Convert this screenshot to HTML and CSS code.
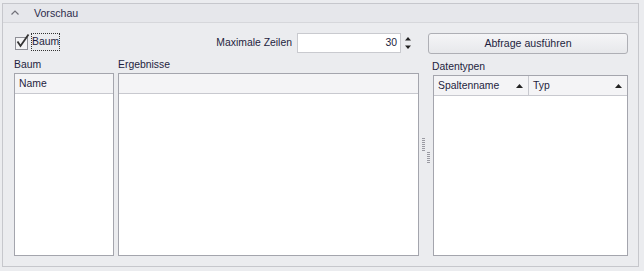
FILE: index.html
```html
<!DOCTYPE html>
<html>
<head>
<meta charset="utf-8">
<link rel="stylesheet" href="styles.css">
</head>
<body>
<div class="panel">
  <div class="ph">
    <svg class="chev" width="8" height="5" viewBox="0 0 8 5"><path d="M0.5 4.5 L4 1 L7.5 4.5" fill="none" stroke="#707078" stroke-width="1.2"/></svg>
    <span class="ptitle">Vorschau</span>
  </div>
  <div class="pb">
    <div class="toprow">
      <div class="cb">
        <span class="box"><svg width="16" height="16" viewBox="0 0 16 16"><path d="M2.5 8.5 L5.5 13 L13.5 1.5" fill="none" stroke="#333" stroke-width="1.8"/></svg></span>
        <span class="cbl">Baum</span>
      </div>
      <div class="maxz">
        <span class="mzl">Maximale Zeilen</span>
        <div class="inp">30</div>
        <div class="spin">
          <svg width="8" height="14" viewBox="0 0 8 14"><path d="M4 1 L7 4.5 L1 4.5 Z" fill="#222"/><path d="M1 9.5 L7 9.5 L4 13 Z" fill="#222"/></svg>
        </div>
      </div>
      <div class="btn">Abfrage ausführen</div>
    </div>
    <div class="main">
      <div class="col baum">
        <div class="lbl">Baum</div>
        <div class="list"><div class="lh"><span class="hc">Name</span></div></div>
      </div>
      <div class="col erg">
        <div class="lbl">Ergebnisse</div>
        <div class="list"><div class="lh"></div></div>
      </div>
      <div class="split">
        <div class="grip g1"></div>
        <div class="grip g2"></div>
      </div>
      <div class="col dt">
        <div class="lbl">Datentypen</div>
        <div class="list">
          <div class="lh cols">
            <div class="hcol c1"><span>Spaltenname</span><svg width="7" height="4" viewBox="0 0 7 4"><path d="M3.5 0 L7 4 L0 4 Z" fill="#222"/></svg></div>
            <div class="hcol c2"><span>Typ</span><svg width="7" height="4" viewBox="0 0 7 4"><path d="M3.5 0 L7 4 L0 4 Z" fill="#222"/></svg></div>
          </div>
        </div>
      </div>
    </div>
  </div>
</div>
</body>
</html>
```
FILE: styles.css
```css
html, body {
  margin: 0;
  padding: 0;
  background: #ebecef;
}
body {
  font-family: "Liberation Sans", Arial, sans-serif;
  font-size: 10.4px;
  color: #1e1e3e;
  width: 644px;
  height: 271px;
  overflow: hidden;
}
.panel {
  margin: 3px 0 0 2px;
  width: 635px;
  height: 262px;
  border: 1px solid #c6c7cc;
  background: #ebecef;
  display: flex;
  flex-direction: column;
}
.ph {
  height: 18px;
  border-bottom: 1px solid #d6d7db;
  background: #e6e7eb;
  display: flex;
  align-items: center;
}
.chev {
  margin-left: 8px;
  margin-top: -1px;
}
.ptitle {
  margin-left: 15px;
  color: #2c2c4c;
  font-size: 10.6px;
}
.pb {
  padding: 10px 10px 10px 11px;
  display: flex;
  flex-direction: column;
}
.toprow {
  height: 22px;
  display: flex;
  align-items: flex-start;
}
.cb {
  display: flex;
  align-items: flex-start;
  margin-left: 1px;
}
.box {
  position: relative;
  width: 11px;
  height: 11px;
  margin-top: 4px;
  border: 1px solid #8e8f96;
  background: #f3f3f5;
}
.box svg {
  position: absolute;
  left: -1px;
  top: -5px;
}
.cbl {
  margin-left: 3px;
  border: 1px dotted #333;
  box-sizing: border-box;
  width: 29px;
  height: 18px;
  line-height: 16px;
}
.maxz {
  margin-left: auto;
  display: flex;
  align-items: flex-start;
}
.mzl {
  line-height: 20px;
  margin-right: 5px;
}
.inp {
  width: 104px;
  height: 20px;
  box-sizing: border-box;
  border: 1px solid #c9cacf;
  background: #fff;
  text-align: right;
  padding-right: 3px;
  line-height: 18px;
}
.spin {
  width: 14px;
  height: 20px;
  display: flex;
  align-items: center;
  justify-content: center;
}
.btn {
  margin-left: 13px;
  width: 200px;
  height: 21px;
  box-sizing: border-box;
  border: 1px solid #aeafb5;
  border-radius: 3px;
  background: linear-gradient(#f5f5f7, #e7e8eb);
  text-align: center;
  line-height: 19px;
  font-size: 10.6px;
}
.main {
  height: 201px;
  display: flex;
}
.col {
  display: flex;
  flex-direction: column;
}
.lbl {
  margin-top: 4px;
  height: 12px;
  line-height: 12px;
  margin-bottom: 2px;
}
.baum { width: 100px; }
.erg { width: 301px; margin-left: 4px; }
.dt { width: 195px; padding-top: 2px; }
.dt .lbl { margin-left: -1px; }
.list {
  flex: 1;
  border: 1px solid #a4a5ad;
  background: #fff;
}
.lh {
  height: 19px;
  border-bottom: 1px solid #c8c9cf;
  background: #f4f4f6;
  display: flex;
  align-items: center;
}
.hc {
  margin-left: 4px;
}
.cols {
  align-items: stretch;
}
.hcol {
  display: flex;
  align-items: center;
  justify-content: space-between;
  box-sizing: border-box;
}
.hcol svg { margin-top: 1px; }
.c1 {
  width: 95px;
  padding: 0 5px 0 4px;
  border-right: 1px solid #c8c9cf;
}
.c2 {
  flex: 1;
  padding: 0 5px 0 4px;
}
.split {
  width: 14px;
  position: relative;
}
.grip {
  position: absolute;
  width: 3px;
  background: repeating-linear-gradient(#9a9aa2 0 1px, transparent 1px 2px);
}
.g1 { left: 3px; top: 83px; height: 13px; }
.g2 { left: 8px; top: 97px; height: 12px; }
```
